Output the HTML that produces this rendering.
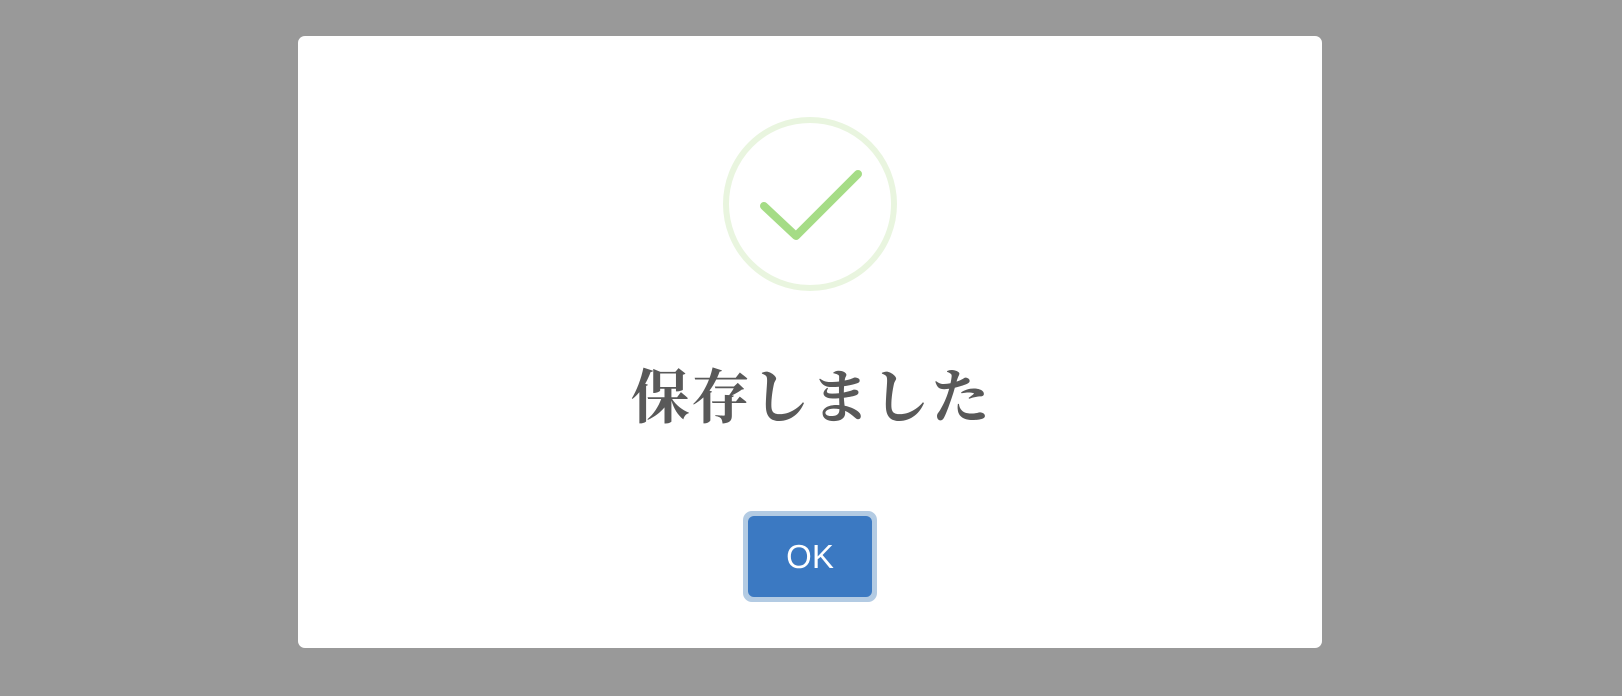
<!DOCTYPE html>
<html><head><meta charset="utf-8"><style>
html,body{margin:0;padding:0;width:1622px;height:696px;background:#999;overflow:hidden}
.modal{position:absolute;left:298px;top:36px;width:1024px;height:612px;background:#fff;border-radius:7px}
svg{position:absolute;left:0;top:0}
.t{position:absolute;left:0;width:1622px;top:360px;text-align:center;font:bold 59px "Liberation Serif","Noto Serif CJK SC",serif;color:#595959;letter-spacing:1px;line-height:76px}
.btn{position:absolute;left:743px;top:511px;width:124px;height:81px;border:5px solid #b3cbe3;border-radius:9px;background:#b3cbe3}
.btn div{position:absolute;left:0;top:0;right:0;bottom:0;background:#3b79c2;border-radius:6px;color:#fff;font:33px "Liberation Sans",sans-serif;text-align:center;line-height:81px}
</style></head><body>
<div class="modal"></div>
<svg width="1622" height="696">
<circle cx="810" cy="204" r="84" fill="none" stroke="#e9f5df" stroke-width="6"/>
<path d="M764 206 L796 236 L858 174" fill="none" stroke="#a5dc86" stroke-width="8" stroke-linecap="round" stroke-linejoin="round"/>
</svg>
<div class="t">保存しました</div>
<div class="btn"><div>OK</div></div>
</body></html>
